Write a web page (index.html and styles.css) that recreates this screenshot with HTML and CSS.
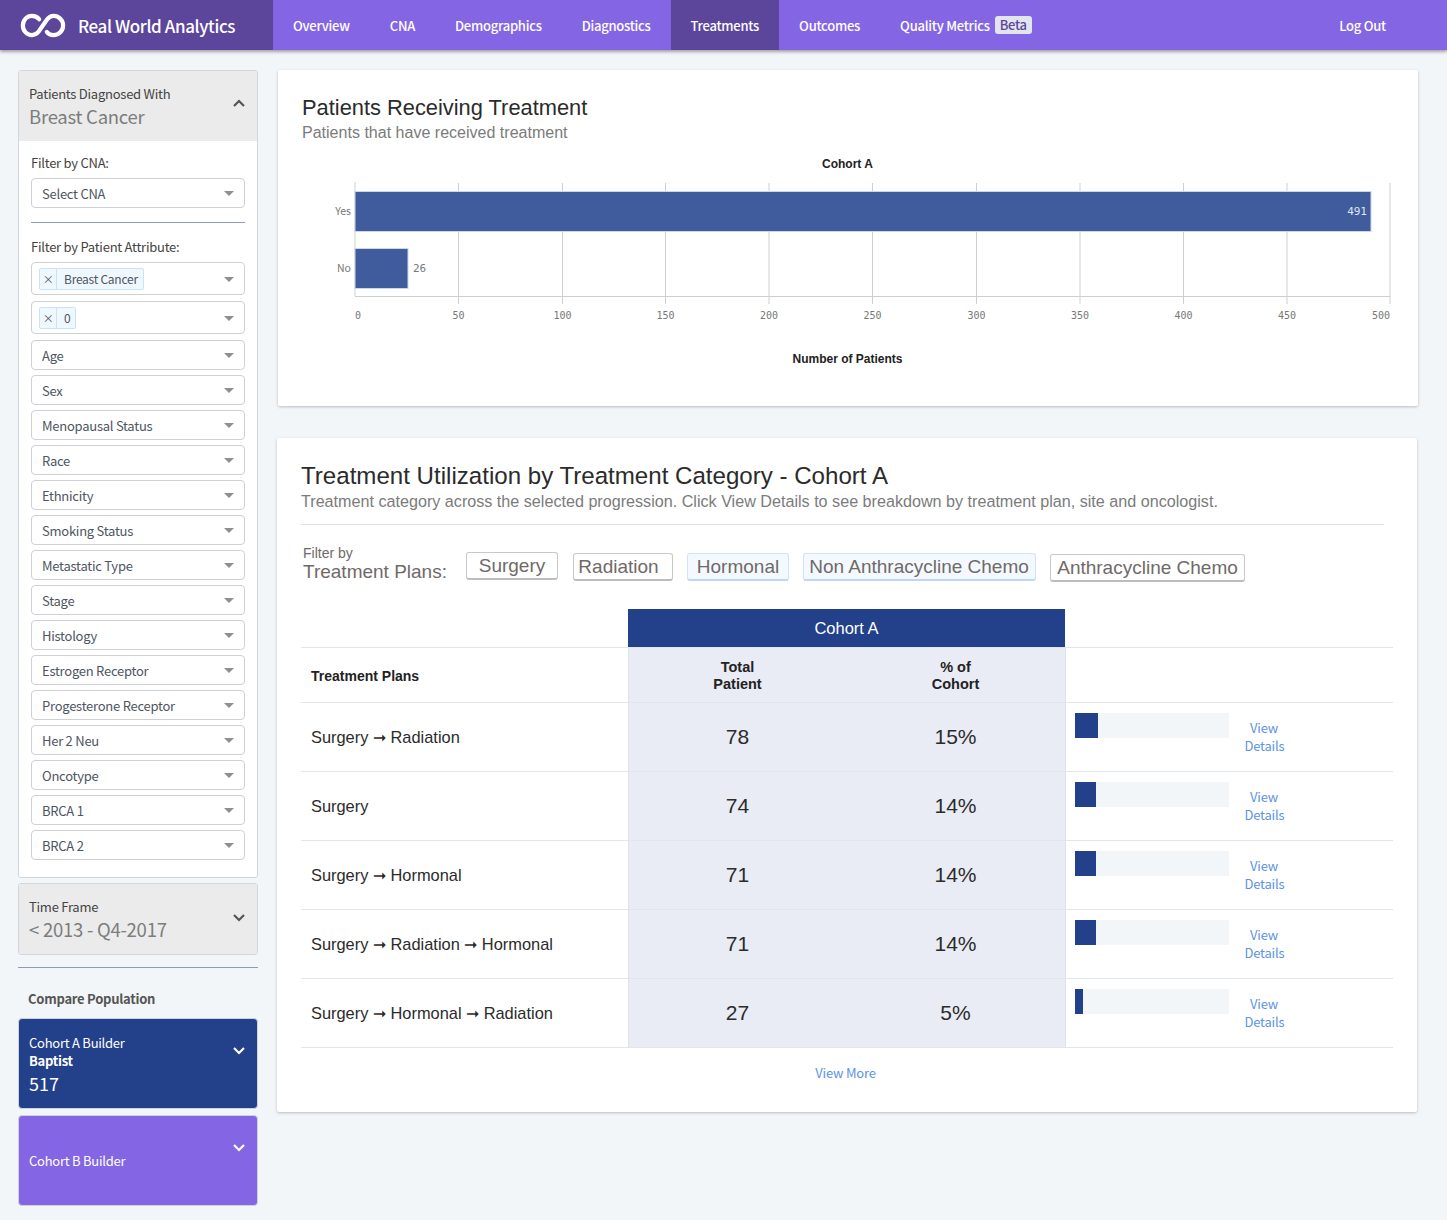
FILE: index.html
```html
<!DOCTYPE html>
<html lang="en">
<head>
<meta charset="utf-8">
<title>Real World Analytics</title>
<link rel="stylesheet" href="styles.css">
</head>
<body>
<header class="topbar">
  <div class="brand">
    <svg class="logo" viewBox="0 0 48 26" width="46" height="25" aria-hidden="true">
      <path d="M20 6.500C18 4 15.500 3 12.500 3 7.300 3 3 7.300 3 13s4.300 10 9.500 10c3 0 5-1.200 7-3.700L28 7c2-2.700 4-4 7-4 5.500 0 10 4.500 10 10s-4.500 10-10 10c-3 0-5.300-1-7-3.300" fill="none" stroke="#fff" stroke-width="4.400" stroke-linecap="round"/>
    </svg>
    <span class="brand-name">Real World Analytics</span>
  </div>
  <nav class="nav">
    <a class="nav-item">Overview</a>
    <a class="nav-item">CNA</a>
    <a class="nav-item">Demographics</a>
    <a class="nav-item">Diagnostics</a>
    <a class="nav-item active">Treatments</a>
    <a class="nav-item">Outcomes</a>
    <a class="nav-item">Quality Metrics <span class="beta">Beta</span></a>
  </nav>
  <a class="nav-item logout">Log Out</a>
</header>

<div class="page">
  <aside class="sidebar">
    <section class="panel">
      <div class="panel-head">
        <div>
          <div class="panel-label">Patients Diagnosed With</div>
          <div class="panel-value">Breast Cancer</div>
        </div>
        <svg class="chev" viewBox="0 0 14 9" width="14" height="9"><path d="M2 7l5-5 5 5" fill="none" stroke="#555" stroke-width="2.200"/></svg>
      </div>
      <div class="panel-body">
        <label class="field-label first">Filter by CNA:</label>
        <div class="select"><span>Select CNA</span><i class="caret"></i></div>
        <hr class="rule">
        <label class="field-label second">Filter by Patient Attribute:</label>
        <div class="stack-tags">
          <div class="select tall"><span class="tag"><b class="tag-x">×</b><span class="tag-text">Breast Cancer</span></span><i class="caret"></i></div>
          <div class="select tall"><span class="tag"><b class="tag-x">×</b><span class="tag-text">0</span></span><i class="caret"></i></div>
        </div>
        <div class="stack">
          <div class="select"><span>Age</span><i class="caret"></i></div>
          <div class="select"><span>Sex</span><i class="caret"></i></div>
          <div class="select"><span>Menopausal Status</span><i class="caret"></i></div>
          <div class="select"><span>Race</span><i class="caret"></i></div>
          <div class="select"><span>Ethnicity</span><i class="caret"></i></div>
          <div class="select"><span>Smoking Status</span><i class="caret"></i></div>
          <div class="select"><span>Metastatic Type</span><i class="caret"></i></div>
          <div class="select"><span>Stage</span><i class="caret"></i></div>
          <div class="select"><span>Histology</span><i class="caret"></i></div>
          <div class="select"><span>Estrogen Receptor</span><i class="caret"></i></div>
          <div class="select"><span>Progesterone Receptor</span><i class="caret"></i></div>
          <div class="select"><span>Her 2 Neu</span><i class="caret"></i></div>
          <div class="select"><span>Oncotype</span><i class="caret"></i></div>
          <div class="select"><span>BRCA 1</span><i class="caret"></i></div>
          <div class="select"><span>BRCA 2</span><i class="caret"></i></div>
        </div>
      </div>
    </section>

    <section class="panel panel-closed">
      <div class="panel-head">
        <div>
          <div class="panel-label">Time Frame</div>
          <div class="panel-value">&lt; 2013 - Q4-2017</div>
        </div>
        <svg class="chev" viewBox="0 0 14 9" width="14" height="9"><path d="M2 2l5 5 5-5" fill="none" stroke="#555" stroke-width="2.200"/></svg>
      </div>
    </section>

    <hr class="side-rule">
    <h4 class="compare-title">Compare Population</h4>

    <section class="builder builder-a">
      <div>
        <div class="builder-name">Cohort A Builder</div>
        <div class="builder-org">Baptist</div>
        <div class="builder-count">517</div>
      </div>
      <svg class="chev" viewBox="0 0 14 9" width="14" height="9"><path d="M2 2l5 5 5-5" fill="none" stroke="#fff" stroke-width="2.200"/></svg>
    </section>
    <section class="builder builder-b">
      <div class="builder-name">Cohort B Builder</div>
      <svg class="chev" viewBox="0 0 14 9" width="14" height="9"><path d="M2 2l5 5 5-5" fill="none" stroke="#fff" stroke-width="2.200"/></svg>
    </section>
  </aside>

  <main class="content">
    <section class="card chart-card">
      <h2 class="chart-title">Patients Receiving Treatment</h2>
      <p class="chart-sub">Patients that have received treatment</p>
      <svg class="chart" viewBox="0 0 1140 250" width="1140" height="250">
        <text class="c-title" x="569.500" y="18">Cohort A</text>
        <g class="grid">
          <path d="M77 32v114M180.500 33v121M284.500 33v121M387.500 33v121M491 33v121M594.500 33v121M698.500 33v121M802 33v121M905.500 33v121M1009 33v121M1112 33v121M77 146.500h1035"/>
        </g>
        <rect class="bar" x="77" y="41.500" width="1016" height="40"/>
        <rect class="bar" x="77" y="98.500" width="53" height="40"/>
        <text class="c-cat" x="73" y="65">Yes</text>
        <text class="c-cat" x="73" y="122">No</text>
        <text class="c-val light" x="1089" y="65">491</text>
        <text class="c-val" x="135" y="122">26</text>
        <g class="c-ticks">
          <text x="80" y="169">0</text><text x="180.500" y="169">50</text><text x="284.500" y="169">100</text><text x="387.500" y="169">150</text><text x="491" y="169">200</text><text x="594.500" y="169">250</text><text x="698.500" y="169">300</text><text x="802" y="169">350</text><text x="905.500" y="169">400</text><text x="1009" y="169">450</text><text x="1103" y="169">500</text>
        </g>
        <text class="c-title" x="569.500" y="213">Number of Patients</text>
      </svg>
    </section>

    <section class="card util-card">
      <h2 class="util-title">Treatment Utilization by Treatment Category - Cohort A</h2>
      <p class="util-sub">Treatment category across the selected progression. Click View Details to see breakdown by treatment plan, site and oncologist.</p>
      <hr class="util-rule">
      <div class="filters">
        <div class="filter-label"><small>Filter by</small><span>Treatment Plans:</span></div>
        <div class="pills">
          <button class="pill pill-surgery">Surgery</button>
          <button class="pill pill-radiation">Radiation</button>
          <button class="pill pill-on pill-hormonal">Hormonal</button>
          <button class="pill pill-on pill-non">Non Anthracycline Chemo</button>
          <button class="pill pill-anth">Anthracycline Chemo</button>
        </div>
      </div>

      <table class="plans">
        <colgroup><col class="col-name"><col class="col-num"><col class="col-num"><col class="col-bar"></colgroup>
        <thead>
          <tr class="row-cohort"><th class="blank"></th><th class="cohort" colspan="2">Cohort A</th><th class="blank"></th></tr>
          <tr class="row-head">
            <th class="th-name">Treatment Plans</th>
            <th class="num">Total<br>Patient</th>
            <th class="num">% of<br>Cohort</th>
            <th class="th-blank"></th>
          </tr>
        </thead>
        <tbody>
          <tr><td class="name">Surgery ➞ Radiation</td><td class="num">78</td><td class="num">15%</td><td class="meter-cell"><div class="meter-wrap"><div class="meter"><div class="meter-fill" style="width:23px"></div></div><a class="details">View<br>Details</a></div></td></tr>
          <tr><td class="name">Surgery</td><td class="num">74</td><td class="num">14%</td><td class="meter-cell"><div class="meter-wrap"><div class="meter"><div class="meter-fill" style="width:21px"></div></div><a class="details">View<br>Details</a></div></td></tr>
          <tr><td class="name">Surgery ➞ Hormonal</td><td class="num">71</td><td class="num">14%</td><td class="meter-cell"><div class="meter-wrap"><div class="meter"><div class="meter-fill" style="width:21px"></div></div><a class="details">View<br>Details</a></div></td></tr>
          <tr><td class="name">Surgery ➞ Radiation ➞ Hormonal</td><td class="num">71</td><td class="num">14%</td><td class="meter-cell"><div class="meter-wrap"><div class="meter"><div class="meter-fill" style="width:21px"></div></div><a class="details">View<br>Details</a></div></td></tr>
          <tr><td class="name">Surgery ➞ Hormonal ➞ Radiation</td><td class="num">27</td><td class="num">5%</td><td class="meter-cell"><div class="meter-wrap"><div class="meter"><div class="meter-fill" style="width:8px"></div></div><a class="details">View<br>Details</a></div></td></tr>
        </tbody>
      </table>
      <a class="view-more">View More</a>
    </section>
  </main>
</div>
</body>
</html>
```
FILE: styles.css
```css
* { box-sizing: border-box; }
html, body { margin: 0; padding: 0; }
body {
  background: #f3f6f9;
  font-family: "Noto Sans CJK SC", "Lato", sans-serif;
  color: #444;
  height: 1220px;
  overflow: hidden;
}

/* top bar */
.topbar {
  display: flex;
  align-items: stretch;
  height: 50px;
  background: #8466e4;
  box-shadow: 0 2px 3px rgba(60, 60, 70, .45);
  position: relative;
}
.brand {
  width: 273px;
  background: #5c469c;
  display: flex;
  align-items: center;
  padding-left: 20px;
  gap: 12px;
}
.logo { display: block; margin-top: 1px; }
.brand-name { color: #fff; font-size: 17px; letter-spacing: -.4px; font-weight: 500; line-height: 24px; padding-top: 1px; }
.nav { display: flex; flex: 1; }
.nav-item {
  color: #fff;
  font-size: 13px;
  letter-spacing: -.25px;
  font-weight: 500;
  padding: 1px 20px 0;
  line-height: 49px;
  white-space: nowrap;
  display: flex;
  align-items: center;
}
.nav-item.active { background: #5c469c; }
.beta {
  display: inline-block;
  background: #e3e5ee;
  color: #5c469c;
  font-size: 13px;
  line-height: 18px;
  border-radius: 3px;
  padding: 0 5px;
  margin: -1px 0 0 5px;
}
.logout { padding-right: 61px; }

/* layout */
.page {
  display: flex;
  align-items: flex-start;
  padding: 20px 29px 0 18px;
  gap: 20px;
}
.sidebar { width: 240px; flex: none; font-size: 13px; letter-spacing: -.25px; }
.content { flex: 1; min-width: 0; }

/* side panels */
.panel {
  background: #fff;
  border: 1px solid #d3d5dc;
  border-radius: 3px;
  height: 808px;
  overflow: hidden;
}
.panel-head {
  background: #ebebeb;
  height: 70px;
  padding: 14px 10px 0;
  display: flex;
  justify-content: space-between;
}
.panel-label { font-size: 13px; line-height: 18px; color: #444; }
.panel-value { font-size: 18.500px; line-height: 26px; color: #7d7d7d; }
.chev { display: block; margin: 14px 1px 0 0; flex: none; }
.panel-body { padding: 0 12px; }
.field-label { display: block; font-size: 13px; line-height: 18px; color: #444; }
.field-label.first { padding-top: 13px; margin-bottom: 6px; }
.field-label.second { margin-bottom: 6px; }
.select {
  height: 30px;
  border: 1px solid #ced0d6;
  border-radius: 4px;
  background: #fff;
  display: flex;
  align-items: center;
  justify-content: space-between;
  padding: 0 10px 0 10px;
  font-size: 13px;
  line-height: 18px;
  color: #4e5562;
}
.select span { white-space: nowrap; }
.select > span:first-child:not(.tag) { margin-top: 1px; }
.caret {
  width: 0;
  height: 0;
  border-left: 5px solid transparent;
  border-right: 5px solid transparent;
  border-top: 5px solid #8f8f8f;
  margin-top: 1px;
}
.rule { border: 0; border-top: 1px solid #8a9dc3; margin: 14px 0 15px; }
.stack-tags { display: flex; flex-direction: column; gap: 6px; margin-bottom: 6px; }
.select.tall { height: 33px; padding-left: 7px; }
.select .tag {
  display: flex;
  align-items: stretch;
  height: 22px;
  border: 1px solid #c9e3fb;
  border-radius: 2px;
  background: #f0f8ff;
  font-size: 12px;
  line-height: 20px;
  color: #4e5562;
}
.tag-x { width: 17px; text-align: center; font-weight: 400; border-right: 1px solid #c9e3fb; font-size: 11px; }
.tag-text { padding: 0 5px 0 7px; }
.stack { display: flex; flex-direction: column; gap: 5px; }

.panel-closed {
  height: 72px;
  margin-top: 5px;
  background: #ebebeb;
}
.panel-closed .chev { margin-top: 15px; }
.side-rule { border: 0; border-top: 1px solid #8e9bb5; margin: 12px 0 0; }
.compare-title {
  margin: 22px 0 10px 10px;
  font-size: 13px;
  line-height: 18px;
  font-weight: 700;
  color: #555;
}
.builder {
  height: 91px;
  border: 1px solid #cfd2da;
  border-radius: 4px;
  color: #fff;
  display: flex;
  justify-content: space-between;
  padding: 15px 10px 0;
  margin-bottom: 6px;
}
.builder-a { background: #23408b; }
.builder-b { background: #8466e4; }
.builder-name { font-size: 13px; line-height: 18px; }
.builder-b .builder-name { margin-top: 21px; }
.builder-org { font-size: 13px; line-height: 18px; font-weight: 700; }
.builder-count { font-size: 18px; line-height: 22px; margin-top: 2px; letter-spacing: 0; }
.builder .chev { margin-top: 12px; }

/* cards */
.card {
  background: #fff;
  border-radius: 2px;
  box-shadow: 0 1px 3px rgba(70, 80, 100, .35);
  font-family: "Liberation Sans", Arial, sans-serif;
}
.chart-card { height: 336px; padding: 25px 0 0 24px; }
.chart-title { margin: 0; font-size: 21.850px; line-height: 26px; font-weight: 400; color: #2b2b2b; }
.chart-sub { margin: 0; font-size: 16.050px; line-height: 22px; color: #7b7b7b; }
.chart { display: block; margin: 7px 0 0 -24px; }
.c-title { font: 700 12px "Liberation Sans", sans-serif; fill: #222; text-anchor: middle; }
.grid path { fill: none; stroke: #cfcfcf; stroke-width: 1; }
.bar { fill: #405c9c; stroke: #cdd6e8; stroke-width: 1; }
.c-cat { font: 10.500px "Noto Sans CJK SC", sans-serif; fill: #777; text-anchor: end; }
.c-val { font: 11px "DejaVu Sans Mono", monospace; fill: #777; }
.c-val.light { fill: #dfe5f2; text-anchor: end; }
.c-ticks text { font: 10px "DejaVu Sans Mono", monospace; fill: #777; text-anchor: middle; }

.util-card {
  height: 674px;
  margin: 32px 1px 0 -1px;
  padding: 24px 24px 0 24px;
}
.util-title { margin: 0; font-size: 24.100px; line-height: 28px; font-weight: 400; color: #2b2b2b; }
.util-sub { margin: 0; font-size: 16.150px; line-height: 22px; color: #7b7b7b; }
.util-rule { border: 0; border-top: 1px solid #dfe3e8; margin: 12px 9px 0 0; }
.filters { display: flex; margin-top: 20px; padding-left: 2px; height: 50px; }
.filter-label { display: flex; flex-direction: column; color: #6f6a68; width: 163px; flex: none; padding-top: 1px; }
.filter-label small { font-size: 14px; line-height: 15px; }
.filter-label span { font-size: 19px; line-height: 22px; }
.pills { display: flex; align-items: flex-start; gap: 14.500px; margin-top: 7px; }
.pill {
  height: 28px;
  padding: 1px 0 0;
  background: #fff;
  border: 1px solid #c9c9c9;
  border-bottom: 2px solid #bdbdbd;
  border-radius: 3px;
  font: 19px/24px "Liberation Sans", sans-serif;
  color: #6f6a68;
  white-space: nowrap;
}
.pill-on { background: #f4f9ff; border-color: #cfe3fb; border-bottom-color: #bcd7f7; }
.pill-surgery { width: 92px; }
.pill-radiation { width: 100px; margin-top: 1px; padding-right: 8px; }
.pill-hormonal { width: 102px; margin-top: 1px; }
.pill-non { width: 233px; margin: 1px 0 0 -1px; }
.pill-anth { width: 195px; margin-top: 2px; }

.plans {
  border-collapse: collapse;
  table-layout: fixed;
  width: 1092px;
  margin-top: 14px;
  font-family: "Liberation Sans", sans-serif;
  color: #2b2b2b;
}
.col-name { width: 327px; }
.col-num { width: 218.500px; }
.col-bar { width: 328px; }
.row-cohort { height: 38px; }
.cohort {
  background: #23408b;
  color: #fff;
  font-size: 16.500px;
  font-weight: 400;
  padding: 2px 0 0;
}
.blank { padding: 0; }
.row-head { height: 55px; }
.row-head th { border-top: 1px solid #e1e6ec; border-bottom: 1px solid #e1e6ec; font-size: 14.500px; line-height: 17px; padding: 2px 0 0; color: #222; }
.row-head .th-name { text-align: left; padding: 4px 0 0 10px; font-size: 14px; }
.plans tbody tr { height: 69px; }
.plans tbody td { border-bottom: 1px solid #e1e6ec; padding: 0; }
.plans tbody .name { padding: 1px 0 0 10px; font-size: 16.400px; white-space: nowrap; }
th.num, td.num { background: #e9ecf5; text-align: center; }
.row-head th:nth-child(2), .plans tbody td:nth-child(2) { border-left: 1px solid #dde2ec; }
.row-head th:nth-child(3), .plans tbody td:nth-child(3) { border-right: 1px solid #dde2ec; }
td.num { font-size: 21px; }
.meter-cell { vertical-align: top; }
.meter-wrap { display: flex; padding: 10px 0 0 9px; }
.meter { width: 154px; height: 25px; background: #f3f6f9; flex: none; }
.meter-fill { height: 25px; background: #23408b; }
.details {
  margin: 6px 0 0 16px;
  width: 39px;
  text-align: center;
  font: 13px/18px "Noto Sans CJK SC", sans-serif;
  letter-spacing: -.2px;
  color: #5b93e5;
}
.view-more {
  display: block;
  text-align: center;
  margin: 16px 0 0;
  padding-right: 3px;
  font: 13px/18px "Noto Sans CJK SC", sans-serif;
  letter-spacing: -.2px;
  color: #5b93e5;
}
```
